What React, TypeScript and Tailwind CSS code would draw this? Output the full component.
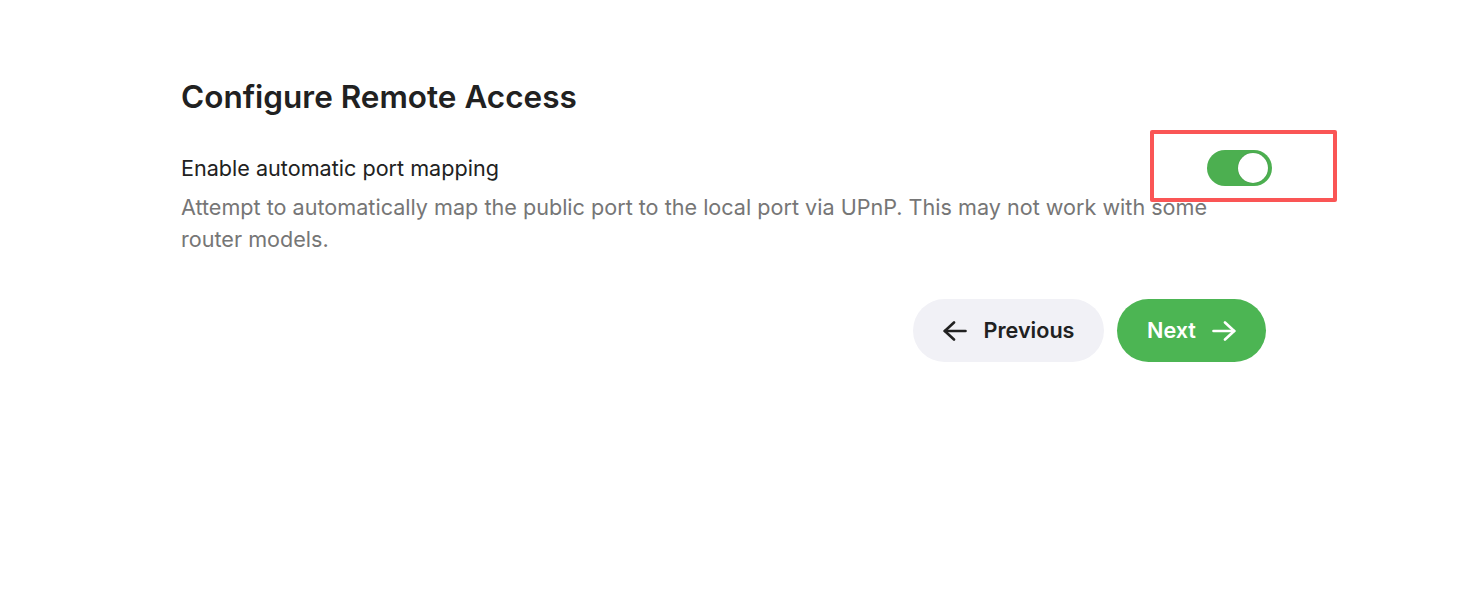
import React from "react";

function ArrowLeft() {
  return (
    <svg width="24" height="20" viewBox="0 0 24 20" fill="none" stroke="currentColor" strokeWidth="2.6" strokeLinecap="round" strokeLinejoin="round">
      <path d="M22.5 10H1.8" />
      <path d="M11 1.5L1.8 10l9.2 8.5" />
    </svg>
  );
}

function ArrowRight() {
  return (
    <svg width="24" height="20" viewBox="0 0 24 20" fill="none" stroke="currentColor" strokeWidth="2.6" strokeLinecap="round" strokeLinejoin="round">
      <path d="M1.5 10h20.7" />
      <path d="M13 1.5l9.2 8.5-9.2 8.5" />
    </svg>
  );
}

export default function App() {
  return (
    <div className="min-h-[591px] w-full bg-white" style={{ fontFamily: "Inter, 'Noto Sans', sans-serif" }}>
      <div className="pl-[181px] pt-[77px] w-[1272px]">
        <h1 className="text-[31.5px] leading-[40px] font-semibold text-[#212121]">Configure Remote Access</h1>
        <div className="mt-[31px] flex items-center justify-between h-[40px]">
          <div className="text-[21.6px] leading-[28px] text-[#212121]">Enable automatic port mapping</div>
          <div className="relative">
            <div className="w-[65px] h-[36px] rounded-full bg-[#4caf50] relative">
              <div className="absolute right-[4px] top-[3px] w-[30px] h-[30px] rounded-full bg-white shadow-[0_0_1px_rgba(0,0,0,0.3)]" />
            </div>
            <div className="absolute left-[-57px] top-[-20px] w-[187px] h-[72px] border-[4px] border-[#fa5555] rounded-[2px] pointer-events-none" />
          </div>
        </div>
        <p className="mt-[3px] text-[21.6px] leading-[32px] text-[#767676]">
          Attempt to automatically map the public port to the local port via UPnP. This may not work with some router models.
        </p>
        <div className="mt-[44px] flex justify-end gap-[13px] pr-[6px]">
          <button className="h-[63px] w-[191px] rounded-full bg-[#f1f1f6] text-[#212121] flex items-center justify-center gap-[17px] text-[21.6px] font-semibold">
            <ArrowLeft />
            <span>Previous</span>
          </button>
          <button className="h-[63px] w-[149px] rounded-full bg-[#4cb553] text-white flex items-center justify-center gap-[16px] text-[21.6px] font-semibold">
            <span>Next</span>
            <ArrowRight />
          </button>
        </div>
      </div>
    </div>
  );
}
